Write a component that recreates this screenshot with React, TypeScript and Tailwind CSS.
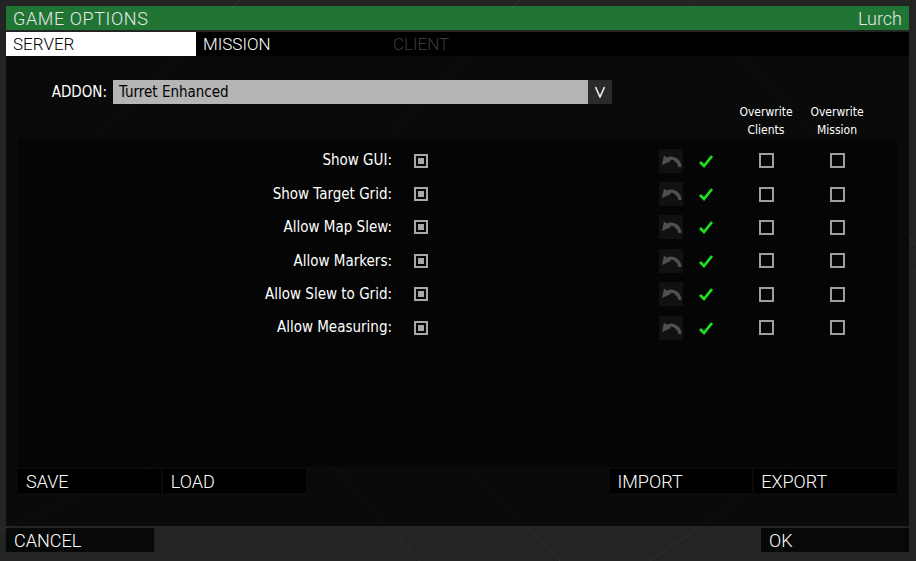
import React from "react";

const rows = [
  "Show GUI:",
  "Show Target Grid:",
  "Allow Map Slew:",
  "Allow Markers:",
  "Allow Slew to Grid:",
  "Allow Measuring:",
];

const purista = { fontFamily: "Roboto, 'DejaVu Sans', sans-serif" };
const cond = { fontFamily: "'DejaVu Sans Condensed', 'Liberation Sans', sans-serif" };

function UndoIcon() {
  return (
    <svg width="24" height="24" viewBox="0 0 24 24">
      <path d="M21 18 C20 11 14 7.5 8.5 10" fill="none" stroke="#505050" strokeWidth="3.4" />
      <path d="M3 16 L5 6.5 L12 12 Z" fill="#505050" />
    </svg>
  );
}

function Check() {
  return (
    <svg width="16" height="16" viewBox="0 0 16 16">
      <path d="M2 9 L6 13 L14 3" fill="none" stroke="#1fe01f" strokeWidth="2.8" />
    </svg>
  );
}

function Backdrop() {
  return (
    <svg className="absolute inset-0" width="916" height="561" viewBox="0 0 916 561">
      <g stroke="#3a3a3a" strokeWidth="1" opacity="0.6">
        <line x1="690" y1="0" x2="916" y2="245" />
        <line x1="916" y1="270" x2="780" y2="400" />
        <line x1="240" y1="0" x2="60" y2="170" />
        <line x1="520" y1="0" x2="330" y2="200" />
        <line x1="60" y1="170" x2="420" y2="561" />
        <line x1="0" y1="530" x2="260" y2="420" />
        <line x1="650" y1="561" x2="900" y2="390" />
        <line x1="300" y1="300" x2="560" y2="561" />
      </g>
    </svg>
  );
}

export default function App() {
  return (
    <div className="relative w-[916px] h-[561px] overflow-hidden bg-[#232424]">
      <Backdrop />
      <div className="relative flex flex-col pl-[6px] pt-[6px] w-[909px]">
        <div
          className="h-[24px] bg-[#217534] flex items-center justify-between px-[7px] text-[18px] font-light text-[#e8e8e8]"
          style={purista}
        >
          <span className="tracking-[0.6px]">GAME OPTIONS</span>
          <span>Lurch</span>
        </div>
        <div className="mt-[2px] h-[24px] bg-black flex items-center text-[17px] font-light" style={purista}>
          <div className="w-[190px] h-full bg-white text-black pl-[7px] pt-[1px] flex items-center">SERVER</div>
          <div className="w-[190px] h-full text-white pl-[7px] pt-[1px] flex items-center">MISSION</div>
          <div className="w-[190px] h-full text-[#3c3c3c] pl-[7px] pt-[1px] flex items-center">CLIENT</div>
        </div>
        <div className="h-[470px] bg-[rgba(0,0,0,0.7)] flex flex-col px-[12px] pt-[24px]">
          <div className="flex items-center h-[24px]">
            <span className="w-[95px] text-right pr-[6px] text-white text-[15px]" style={cond}>
              ADDON:
            </span>
            <div className="w-[475px] h-full bg-[#b5b5b5] text-black text-[15px] flex items-center pl-[6px]" style={cond}>
              Turret Enhanced
            </div>
            <div className="w-[24px] h-full bg-[#2a2b2b] flex items-center justify-center">
              <svg width="12" height="12" viewBox="0 0 12 12">
                <path d="M1.5 1 L6 11 L10.5 1" fill="none" stroke="#f0f0f0" strokeWidth="1.6" />
              </svg>
            </div>
          </div>
          <div className="h-[35px] flex text-[12px] leading-[18px] text-white" style={cond}>
            <div className="ml-[718px] -mt-[1px] w-[60px] text-center">Overwrite<br />Clients</div>
            <div className="ml-[11px] -mt-[1px] w-[60px] text-center">Overwrite<br />Mission</div>
          </div>
          <div className="h-[328px] bg-[rgba(0,0,0,0.45)] flex flex-col pt-[5px]">
            {rows.map((r) => (
              <div key={r} className="h-[33.4px] flex items-center">
                <span className="w-[374px] text-right text-white text-[15px]" style={cond}>
                  {r}
                </span>
                <div className="ml-[22px] w-[14px] h-[14px] border-2 border-[#a8a8a8] p-[2px]">
                  <div className="w-full h-full bg-[#a8a8a8]" />
                </div>
                <div className="ml-[231px] w-[24px] h-[24px] bg-[#111111] flex items-center justify-center">
                  <UndoIcon />
                </div>
                <div className="ml-[15px]">
                  <Check />
                </div>
                <div className="ml-[45px] w-[15px] h-[15px] border-2 border-[#9e9e9e]" />
                <div className="ml-[56px] w-[15px] h-[15px] border-2 border-[#9e9e9e]" />
              </div>
            ))}
          </div>
          <div className="mt-[2px] flex h-[24px] text-[18px] font-light text-white" style={purista}>
            <div className="w-[143px] bg-black pl-[8px] pt-[1px] flex items-center">SAVE</div>
            <div className="ml-[2px] w-[143px] bg-black pl-[8px] pt-[1px] flex items-center">LOAD</div>
            <div className="ml-[304px] w-[143px] bg-black pl-[8px] pt-[1px] flex items-center">IMPORT</div>
            <div className="ml-[2px] w-[143px] bg-black pl-[7px] pt-[1px] flex items-center">EXPORT</div>
          </div>
        </div>
        <div className="mt-[2px] flex justify-between h-[24px] text-[18px] font-light text-white" style={purista}>
          <div className="w-[148px] bg-[#070808] pl-[8px] pt-[1px] flex items-center">CANCEL</div>
          <div className="w-[148px] bg-[#070808] pl-[8px] pt-[1px] flex items-center">OK</div>
        </div>
      </div>
    </div>
  );
}
